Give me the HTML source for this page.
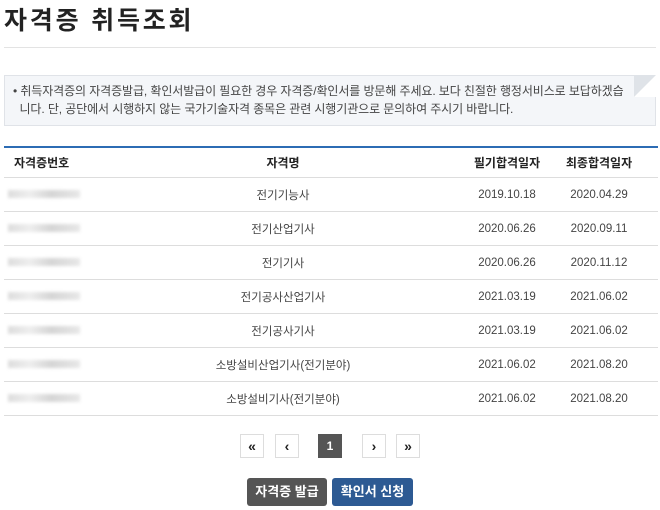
<!DOCTYPE html>
<html><head><meta charset="utf-8"><style>
body{margin:0;width:660px;height:510px;background:#fff;font-family:"Liberation Sans","Noto Sans CJK KR",sans-serif;color:#333;position:relative;overflow:hidden}
.t{position:absolute;left:4px;top:1px;font-size:25px;font-weight:bold;color:#222;letter-spacing:2.8px}
.hr{position:absolute;left:4px;right:4px;top:47px;border-top:1px solid #e3e3e3}
.note{position:absolute;left:4px;top:75px;width:652px;height:51px;background:#f4f6f9;border:1px solid #e0e3e8;box-sizing:border-box;font-size:12px;line-height:18px;padding:6px 8px;color:#444;letter-spacing:-0.1px}
.fold{position:absolute;right:4px;top:75px;width:0;height:0;border-left:22px solid #dfe3e8;border-bottom:22px solid #fff}
table{position:absolute;left:4px;top:146px;width:654px;border-collapse:collapse;font-size:11.5px;table-layout:fixed}
th{border-top:2px solid #2c6cb4;height:29px;padding:0;font-weight:bold;color:#222;border-bottom:1px solid #ddd;font-size:12px}
td{height:33px;padding:0;border-bottom:1px solid #ddd;text-align:center;color:#444}
.blur{display:inline-block;margin-left:4px;width:72px;height:8px;background:linear-gradient(90deg,#ddd,#eee 30%,#d5d5d5 60%,#e8e8e8);filter:blur(1.5px)}
.pg{position:absolute;top:434px;width:24px;height:24px;border:1px solid #ddd;box-sizing:border-box;text-align:center;line-height:22px;font-weight:bold;font-size:14px;color:#222}
.btn{position:absolute;top:478px;height:28px;color:#fff;font-weight:bold;font-size:13px;text-align:center;line-height:28px;border-radius:3px}
</style></head><body>
<div class="t">자격증 취득조회</div>
<div class="hr"></div>
<div class="note">• 취득자격증의 자격증발급, 확인서발급이 필요한 경우 자격증/확인서를 방문해 주세요. 보다 친절한 행정서비스로 보답하겠습<br>&nbsp;&nbsp;니다. 단, 공단에서 시행하지 않는 국가기술자격 종목은 관련 시행기관으로 문의하여 주시기 바랍니다.</div>
<div class="fold"></div>
<table>
<colgroup><col style="width:100px"><col style="width:358px"><col style="width:90px"><col style="width:106px"></colgroup>
<tr><th style="text-align:left;padding-left:10px">자격증번호</th><th>자격명</th><th>필기합격일자</th><th style="padding-right:12px">최종합격일자</th></tr>
<tr><td style="text-align:left"><span class="blur"></span></td><td>전기기능사</td><td>2019.10.18</td><td style="padding-right:12px">2020.04.29</td></tr>
<tr><td style="text-align:left"><span class="blur"></span></td><td>전기산업기사</td><td>2020.06.26</td><td style="padding-right:12px">2020.09.11</td></tr>
<tr><td style="text-align:left"><span class="blur"></span></td><td>전기기사</td><td>2020.06.26</td><td style="padding-right:12px">2020.11.12</td></tr>
<tr><td style="text-align:left"><span class="blur"></span></td><td>전기공사산업기사</td><td>2021.03.19</td><td style="padding-right:12px">2021.06.02</td></tr>
<tr><td style="text-align:left"><span class="blur"></span></td><td>전기공사기사</td><td>2021.03.19</td><td style="padding-right:12px">2021.06.02</td></tr>
<tr><td style="text-align:left"><span class="blur"></span></td><td>소방설비산업기사(전기분야)</td><td>2021.06.02</td><td style="padding-right:12px">2021.08.20</td></tr>
<tr><td style="text-align:left"><span class="blur"></span></td><td>소방설비기사(전기분야)</td><td>2021.06.02</td><td style="padding-right:12px">2021.08.20</td></tr>
</table>
<div class="pg" style="left:240px">«</div>
<div class="pg" style="left:275px">‹</div>
<div class="pg" style="left:318px;background:#555;color:#fff;border-color:#555;font-size:12px">1</div>
<div class="pg" style="left:362px">›</div>
<div class="pg" style="left:396px">»</div>
<div class="btn" style="left:247px;width:80px;background:#555">자격증 발급</div>
<div class="btn" style="left:332px;width:81px;background:#2d5a93">확인서 신청</div>
</body></html>
